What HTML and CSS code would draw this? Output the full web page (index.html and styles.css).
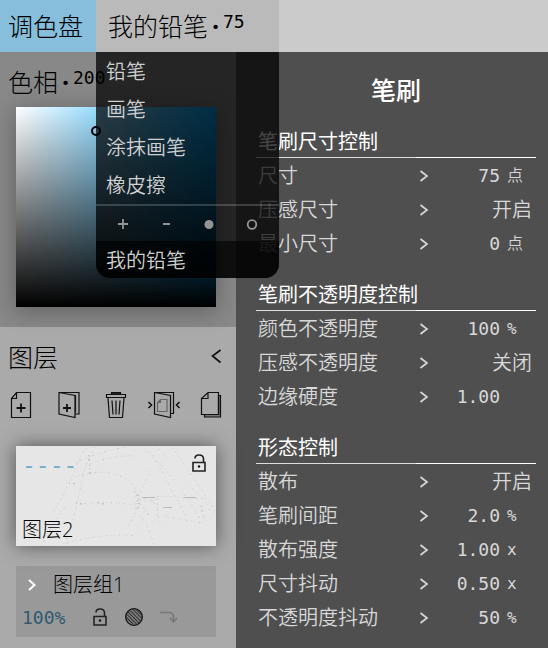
FILE: index.html
```
<!DOCTYPE html>
<html lang="zh-CN">
<head>
<meta charset="utf-8">
<meta name="viewport" content="width=device-width, initial-scale=1">
<title>笔刷</title>
<link rel="stylesheet" href="styles.css">
</head>
<body>
<header class="topbar">
  <button class="tab tab-active" type="button">调色盘</button>
  <div class="picker">
    <button class="tab tab-brush" type="button">我的铅笔<span class="dot">·</span><span class="num">75</span></button>
    <div class="menu">
      <button class="menu-item" type="button">铅笔</button>
      <button class="menu-item" type="button">画笔</button>
      <button class="menu-item" type="button">涂抹画笔</button>
      <button class="menu-item" type="button">橡皮擦</button>
      <div class="menu-tools">
        <button type="button" aria-label="添加"><svg width="12" height="12" viewBox="0 0 12 12"><path d="M6 1v10M1 6h10"/></svg></button>
        <button type="button" aria-label="删除"><svg width="12" height="12" viewBox="0 0 12 12"><path d="M3 6h7"/></svg></button>
        <button type="button" aria-label="实心"><svg width="12" height="12" viewBox="0 0 12 12"><circle class="solid" cx="6" cy="6.500" r="4.500"/></svg></button>
        <button type="button" aria-label="空心"><svg width="12" height="12" viewBox="0 0 12 12"><circle cx="6" cy="6.500" r="4.300"/></svg></button>
      </div>
      <button class="menu-item menu-current" type="button">我的铅笔</button>
    </div>
  </div>
</header>
<main class="work">
  <aside class="side">
    <section class="hue">
      <h2 class="panel-title">色相<span class="dot">·</span><span class="num">200</span></h2>
      <div class="spectrum"><span class="marker"></span></div>
    </section>
    <section class="layers">
      <div class="layers-head">
        <h2 class="panel-title">图层</h2>
        <button class="icon-btn" type="button" aria-label="收起"><svg class="line" width="12" height="16" viewBox="0 0 12 16"><path d="M10.500 1L2.500 7l8 6.500" stroke-width="1.700"/></svg></button>
      </div>
      <div class="tools">
        <button class="icon-btn" type="button" aria-label="新建图层"><svg class="line" width="34" height="28" viewBox="0 0 34 28"><path d="M13.500 1.500h14v25h-19V7.500zM13.500 1.500v6h-5"/><path d="M18 12.500v9M13.500 17h9" stroke-width="1.800"/></svg></button>
        <button class="icon-btn" type="button" aria-label="新建图层组"><svg class="line" width="34" height="28" viewBox="0 0 34 28"><path d="M8 1.500l16 3v22l-16-3.500zM8 1.500h20v21.500h-4M24 4.500h.500v17"/><path d="M16 13v8M12 17h8" stroke-width="1.800"/></svg></button>
        <button class="icon-btn" type="button" aria-label="删除图层"><svg class="line" width="34" height="28" viewBox="0 0 34 28"><path d="M7.500 3.500h19v3h-19zM9 7l1.500 19.500h13L25 7M13 9.500l1 14M17 9.500v14M21 9.500l-1 14"/><path class="lid" d="M12.500 1.500h9v1.500h-9z"/></svg></button>
        <button class="icon-btn" type="button" aria-label="合并图层组"><svg class="line" width="34" height="28" viewBox="0 0 34 28"><path d="M7.500 1.500l16 3v22l-16-3.500zM7.500 1.500h19v21h-3M23.500 4.500v18"/><path d="M1.500 11l3 3-3 3M32.500 11l-3 3 3 3" stroke-width="1.600"/><path class="faint" d="M13.500 8.500h6.500v12h-9.500v-9zM13.500 8.500v3h-3"/></svg></button>
        <button class="icon-btn" type="button" aria-label="复制图层"><svg class="line" width="34" height="28" viewBox="0 0 34 28"><path class="shade" d="M23.500 4.500h2v21.500h-16v-2.500h14z"/><path d="M13 1.500h10.500v22h-17V7.500zM13 1.500v6H6.500"/></svg></button>
      </div>
      <article class="layer">
        <svg class="sketch" viewBox="0 0 200 100" preserveAspectRatio="none">
          <path d="M70 2C62 12 60 24 52 38C46 54 40 60 36 68M78 1C70 18 66 30 64 44C60 66 54 82 48 100M60 16Q90 4 110 1M50 35Q85 18 112 34Q124 43 120 62Q118 72 112 80M64 58Q94 54 120 60M26 100Q36 76 50 60M47 98Q90 86 122 90M70 20Q94 9 118 10M128 2Q145 20 150 34L170 70M134 6L158 34M157 2Q180 36 198 62Q200 70 186 77Q162 73 148 70M139 0L152 12M124 54Q140 48 168 52L190 53M118 62Q126 44 134 24M119 50Q132 60 142 52Q140 70 145 78M134 54Q148 62 136 78M124 70Q132 78 138 100M166 45Q180 66 186 76M173 40Q189 52 195 66"/>
          <path class="speck" d="M118 46Q126 48 121 66M121 54L134 70M53 37l7 1M73 9l1 20M185 60l3 13M82 57l6 1M60 57l6 1"/>
          <path class="stroke" d="M126 51.500h13M168 51.500h12M147 61.500h9"/>
        </svg>
        <div class="layer-top">
          <span class="blend">----</span>
          <button class="icon-btn" type="button" aria-label="锁定图层2"><svg class="lock" width="16" height="20" viewBox="0 0 16 20"><path d="M2 9.500h12v8.500H2zM4 5.500Q4 2 8 2q4.500 0 4.500 4v3.500"/><circle cx="8" cy="13.500" r="1.200"/></svg></button>
        </div>
        <span class="layer-name">图层2</span>
      </article>
      <article class="group">
        <button class="group-row" type="button"><svg width="10" height="14" viewBox="0 0 10 14"><path d="M2 2l5.500 5L2 12"/></svg>图层组1</button>
        <div class="group-tools">
          <span class="opacity">100%</span>
          <button class="icon-btn" type="button" aria-label="锁定图层组1"><svg class="lock" width="16" height="20" viewBox="0 0 16 20"><path d="M2 9.500h12v8.500H2zM4 5.500Q4 2 8 2q4.500 0 4.500 4v3.500"/><circle cx="8" cy="13.500" r="1.200"/></svg></button>
          <button class="icon-btn" type="button" aria-label="透明度锁定"><svg class="hatch" width="20" height="20" viewBox="0 0 20 20"><circle cx="10" cy="10" r="8.300"/><path d="M4 5l11 11M6 3.500L16.500 14M9 2.500l8.500 8.500M3 7.500l9.500 9.500M2.500 10.500l6.500 6.500M12.500 3l4.500 4.500"/></svg></button>
          <button class="icon-btn" type="button" aria-label="剪贴蒙版"><svg class="clip" width="20" height="16" viewBox="0 0 20 16"><path d="M0 3.500h9q4.500 0 4.500 5v4"/><path d="M10 9l3.500 4L17 9"/></svg></button>
        </div>
      </article>
    </section>
  </aside>
  <section class="brush">
    <h1>笔刷</h1>
    <section class="controls">
      <h2>笔刷尺寸控制</h2>
      <button class="row" type="button"><span>尺寸</span><svg class="chev" viewBox="0 0 10 14"><path d="M1.500 2l6.500 5-6.500 5"/></svg><span class="val">75</span><span class="unit">点</span></button>
      <button class="row" type="button"><span>压感尺寸</span><svg class="chev" viewBox="0 0 10 14"><path d="M1.500 2l6.500 5-6.500 5"/></svg><span class="state">开启</span></button>
      <button class="row" type="button"><span>最小尺寸</span><svg class="chev" viewBox="0 0 10 14"><path d="M1.500 2l6.500 5-6.500 5"/></svg><span class="val">0</span><span class="unit">点</span></button>
    </section>
    <section class="controls">
      <h2>笔刷不透明度控制</h2>
      <button class="row" type="button"><span>颜色不透明度</span><svg class="chev" viewBox="0 0 10 14"><path d="M1.500 2l6.500 5-6.500 5"/></svg><span class="val">100</span><span class="unit">%</span></button>
      <button class="row" type="button"><span>压感不透明度</span><svg class="chev" viewBox="0 0 10 14"><path d="M1.500 2l6.500 5-6.500 5"/></svg><span class="state">关闭</span></button>
      <button class="row" type="button"><span>边缘硬度</span><svg class="chev" viewBox="0 0 10 14"><path d="M1.500 2l6.500 5-6.500 5"/></svg><span class="val">1.00</span></button>
    </section>
    <section class="controls">
      <h2>形态控制</h2>
      <button class="row" type="button"><span>散布</span><svg class="chev" viewBox="0 0 10 14"><path d="M1.500 2l6.500 5-6.500 5"/></svg><span class="state">开启</span></button>
      <button class="row" type="button"><span>笔刷间距</span><svg class="chev" viewBox="0 0 10 14"><path d="M1.500 2l6.500 5-6.500 5"/></svg><span class="val">2.0</span><span class="unit">%</span></button>
      <button class="row" type="button"><span>散布强度</span><svg class="chev" viewBox="0 0 10 14"><path d="M1.500 2l6.500 5-6.500 5"/></svg><span class="val">1.00</span><span class="unit">x</span></button>
      <button class="row" type="button"><span>尺寸抖动</span><svg class="chev" viewBox="0 0 10 14"><path d="M1.500 2l6.500 5-6.500 5"/></svg><span class="val">0.50</span><span class="unit">x</span></button>
      <button class="row" type="button"><span>不透明度抖动</span><svg class="chev" viewBox="0 0 10 14"><path d="M1.500 2l6.500 5-6.500 5"/></svg><span class="val">50</span><span class="unit">%</span></button>
    </section>
  </section>
</main>
</body>
</html>
```

FILE: styles.css
```
* { box-sizing: border-box; }

body {
  margin: 0;
  min-height: 100vh;
  display: flex;
  flex-direction: column;
  font-family: "Open Sans", "Noto Sans CJK SC", sans-serif;
  font-size: 20px;
  font-weight: 300;
  color: #000;
  background: #4d4d4d;
}

button {
  margin: 0;
  padding: 0;
  border: 0;
  background: none;
  font: inherit;
  color: inherit;
  text-align: left;
}

h1, h2 { margin: 0; }
svg { display: block; fill: none; }

.num, .val, .unit, .opacity { font-family: "DejaVu Sans Mono", "Noto Sans CJK SC", monospace; }

/* Top bar */
.topbar {
  display: flex;
  height: 52px;
  background: #cbcbcb;
}

.tab {
  display: flex;
  align-items: center;
  height: 52px;
  font-size: 25px;
  line-height: 50px;
}

.tab-active {
  width: 96px;
  padding-left: 8px;
  background: #87bedc;
}

.picker {
  position: relative;
  width: 183px;
}

.tab-brush {
  width: 100%;
  padding-left: 12px;
  background: #bababa;
}

.dot {
  width: 15px;
  text-align: center;
  font-weight: 700;
}

.num {
  font-size: 18px;
  font-weight: 400;
  line-height: 20px;
  padding-bottom: 8px;
}

/* Brush menu */
.menu {
  position: absolute;
  z-index: 2;
  top: 100%;
  left: 0;
  width: 100%;
  overflow: hidden;
  border-radius: 0 0 14px 14px;
  background: rgba(0, 0, 0, .73);
  color: #d0d0d0;
}

.menu-item {
  display: block;
  width: 100%;
  height: 38px;
  padding-left: 10px;
  font-weight: 350;
  line-height: 40px;
}

.menu-tools {
  display: grid;
  grid-template-columns: repeat(4, 1fr);
  height: 37px;
  padding: 0 6px;
  border-top: 2px solid rgba(255, 255, 255, .18);
}

.menu-tools button {
  display: grid;
  place-items: center;
}

.menu-tools svg {
  stroke: #949494;
  stroke-width: 1.8;
}

.menu-tools .solid { fill: #949494; stroke: none; }
.menu-current {
  height: 37px;
  background: rgba(0, 0, 0, .6);
}

/* Workspace */
.work {
  flex: 1;
  display: flex;
}

.side {
  flex: 0 0 236px;
  display: flex;
  flex-direction: column;
  background: #aaa;
}

.panel-title {
  display: flex;
  align-items: center;
  font-size: 25px;
  font-weight: 300;
  line-height: 40px;
  height: 40px;
}

.hue {
  padding: 10px 20px 20px 16px;
  background: #888;
}

.hue .panel-title {
  margin: 0 0 5px -8px;
}

.spectrum {
  position: relative;
  height: 200px;
  background: linear-gradient(to top, #000, transparent), linear-gradient(to right, #fff, hsl(200, 100%, 50%));
  box-shadow: 0 4px 22px rgba(0, 0, 0, .3);
}

.marker {
  position: absolute;
  left: 75px;
  top: 19px;
  width: 10px;
  height: 10px;
  border: 2px solid #000;
  border-radius: 50%;
}

.layers { padding: 10px 20px 11px 16px; }

.layers-head {
  display: flex;
  align-items: center;
  justify-content: space-between;
  margin: 0 -8px 14px -8px;
}

.layers-head .icon-btn { margin-right: 2px; }
.line { stroke: #111; stroke-width: 1.2; }
.line .lid { fill: #333; }
.line .faint { stroke: #666; }
.line .shade { fill: #777; }

.tools {
  display: flex;
  justify-content: space-between;
  margin: 0 -13px 27px -13px;
}

.layer {
  position: relative;
  display: flex;
  flex-direction: column;
  justify-content: space-between;
  height: 100px;
  margin-bottom: 20px;
  padding: 6px 9px 2px 6px;
  background: #e6e6e6;
  box-shadow: 0 0 18px rgba(0, 0, 0, .5);
}

.sketch {
  position: absolute;
  inset: 0;
  width: 100%;
  height: 100%;
  stroke: #cdcdcd;
  stroke-width: 1;
  stroke-dasharray: 1 3 2 4 1 2;
}

.sketch .speck { stroke: #b4b4b4; }
.sketch .stroke { stroke: #bbb; stroke-dasharray: none; }

.layer-top {
  position: relative;
  display: flex;
  justify-content: space-between;
}

.layer-top .icon-btn { height: 22px; }

.blend {
  font-family: "DejaVu Sans Mono", monospace;
  font-size: 23px;
  font-weight: 400;
  line-height: 26px;
  color: #74adc9;
}

.lock { stroke: #222; stroke-width: 1.6; }
.lock circle { fill: #111; stroke: none; }

.layer-name {
  position: relative;
  line-height: 28px;
}

.group {
  height: 71px;
  padding: 4px 6px;
  background: #999;
}

.group-row {
  display: flex;
  align-items: center;
  gap: 16px;
  width: 100%;
  height: 30px;
  padding-left: 5px;
  line-height: 30px;
}

.group-row svg {
  width: 10px;
  stroke: #fff;
  stroke-width: 2;
}

.group-tools {
  display: flex;
  align-items: center;
  height: 34px;
}

.opacity {
  width: 70px;
  font-size: 18px;
  font-weight: 400;
  color: #315a70;
}

.group-tools .icon-btn + .icon-btn { margin-left: 16px; }
.hatch circle { fill: #777; stroke: #111; stroke-width: 1.3; }
.hatch path { stroke: #222; stroke-width: 1; }
.clip { stroke: #777; stroke-width: 1.6; }

/* Brush settings */
.brush {
  flex: 1;
  padding: 18px 12px 14px 20px;
  background: #4f4f4f;
  color: #d8d8d8;
}

h1 {
  height: 40px;
  margin-bottom: 14px;
  font-size: 25px;
  font-weight: 500;
  line-height: 40px;
  text-align: center;
  color: #fff;
}

.controls + .controls { margin-top: 17px; }

.controls h2 {
  height: 34px;
  padding-left: 2px;
  font-size: 20px;
  font-weight: 400;
  line-height: 36px;
  color: #fff;
  background: linear-gradient(to right, #ddd 160px, #fff 160px) bottom / 100% 1px no-repeat;
}

.row {
  display: grid;
  grid-template-columns: 1fr 10px 71px 32px;
  align-items: center;
  width: 100%;
  height: 34px;
  padding: 0 4px 0 2px;
  font-weight: 350;
  line-height: 36px;
}

.chev {
  width: 10px;
  height: 14px;
  stroke: #d8d8d8;
  stroke-width: 1.7;
}

.val {
  font-size: 18px;
  font-weight: 400;
  text-align: right;
}

.unit {
  padding-left: 7px;
  font-size: 16px;
}

.state {
  grid-column: 3 / 5;
  text-align: right;
}
```
